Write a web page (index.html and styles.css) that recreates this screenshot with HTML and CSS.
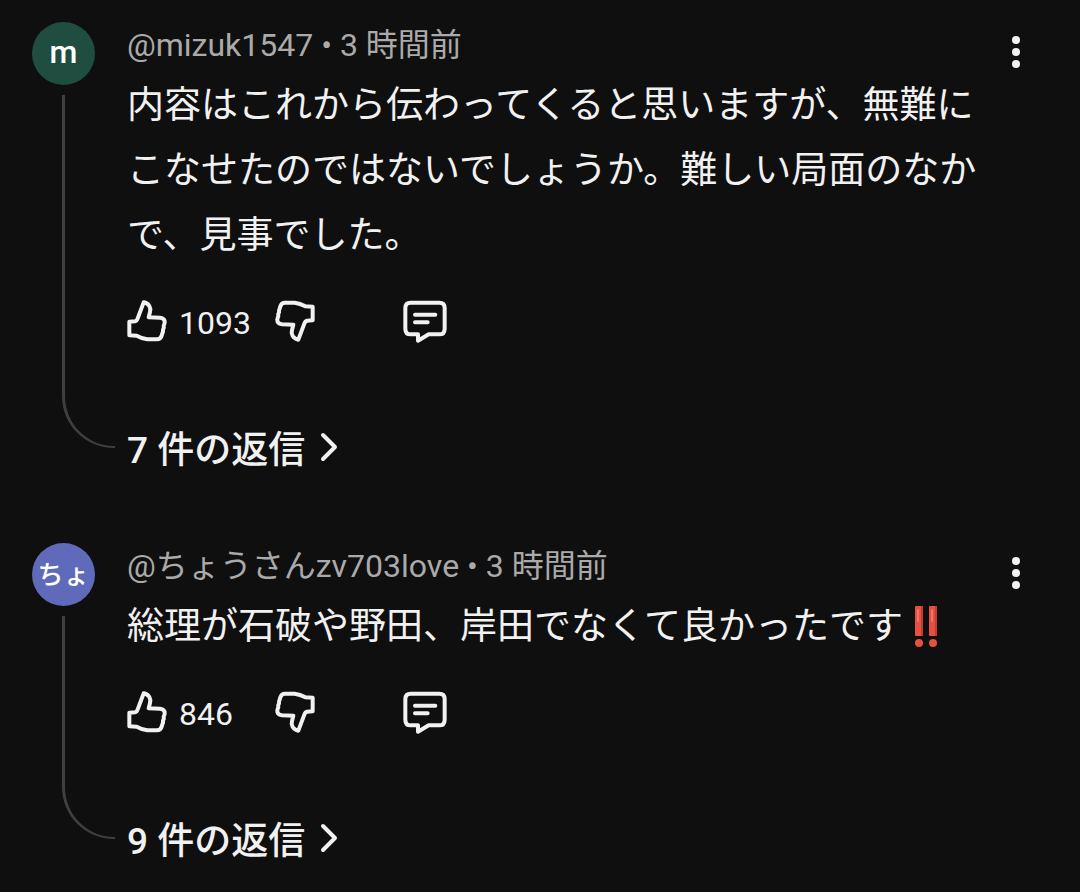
FILE: index.html
```html
<!DOCTYPE html>
<html lang="ja">
<head>
  <meta charset="UTF-8" />
  <meta name="viewport" content="width=device-width, initial-scale=1.0"/>
  <title>コメント</title>
  <link rel="stylesheet" href="styles.css">
</head>
<body>
  <!-- 共通アイコン -->
  <svg class="icon-defs" aria-hidden="true">
    <symbol id="icon-thumb" viewBox="51 57 126 126">
      <path d="M58 122 L75 121 Q80 120 83 112 L101 64 Q112 66 118 75 Q123 84 120 93 L116 109 L150 110 Q165 112 164 124 Q164 129 161 134 Q163 140 159 146 Q160 151 157 157 L155 164 Q152 175 141 175 L112 175 Q96 173 80 164 L58 163 Z"/>
    </symbol>
    <symbol id="icon-comment" viewBox="880 58 132 132">
      <path d="M903 69 H989 Q1005 69 1005 85 V147 Q1005 164 989 164 H957 L925 183 V164 H903 Q887 164 887 147 V85 Q887 69 903 69 Z M916 105 H977 M916 128 H954"/>
    </symbol>
    <symbol id="icon-more" viewBox="0 0 36 36">
      <circle cx="18" cy="6" r="4"/>
      <circle cx="18" cy="18" r="4"/>
      <circle cx="18" cy="30" r="4"/>
    </symbol>
    <symbol id="icon-chevron" viewBox="0 0 20 30">
      <path d="M3 3 L15 15 L3 27"/>
    </symbol>
  </svg>

  <main class="comments">
    <article class="comment">
      <div class="side">
        <div class="avatar green">m</div>
        <div class="thread"></div>
      </div>
      <div class="content">
        <div class="meta"><a href="#">@mizuk1547</a> • 3 時間前</div>
        <p class="text">内容はこれから伝わってくると思いますが、無難にこなせたのではないでしょうか。難しい局面のなかで、見事でした。</p>
        <div class="actions">
          <button aria-label="高評価"><svg class="icon"><use href="#icon-thumb"/></svg></button>
          <span class="count">1093</span>
          <button aria-label="低評価"><svg class="icon down"><use href="#icon-thumb"/></svg></button>
          <button class="reply" aria-label="返信する"><svg class="icon comment-icon"><use href="#icon-comment"/></svg></button>
        </div>
        <button class="replies">7 件の返信<svg class="chevron"><use href="#icon-chevron"/></svg></button>
      </div>
      <button class="more" aria-label="その他"><svg><use href="#icon-more"/></svg></button>
    </article>

    <article class="comment">
      <div class="side">
        <div class="avatar blue">ちょ</div>
        <div class="thread"></div>
      </div>
      <div class="content">
        <div class="meta"><a href="#">@ちょうさんzv703love</a> • 3 時間前</div>
        <p class="text">総理が石破や野田、岸田でなくて良かったです<svg class="emoji" viewBox="-1 5 46 46" role="img" aria-label="!!">
          <rect class="mark" x="11" y="5" width="8" height="30" rx="1"/>
          <rect class="mark" x="25" y="5" width="8" height="30" rx="1"/>
          <path class="shade" d="M17 5 H19 V35 H17 Z M31 5 H33 V35 H31 Z"/>
          <path class="shine" d="M14 9 V20 M28 9 V20"/>
          <circle class="mark" cx="15" cy="42" r="4"/>
          <circle class="mark" cx="29" cy="42" r="4"/>
        </svg></p>
        <div class="actions">
          <button aria-label="高評価"><svg class="icon"><use href="#icon-thumb"/></svg></button>
          <span class="count">846</span>
          <button aria-label="低評価"><svg class="icon down"><use href="#icon-thumb"/></svg></button>
          <button class="reply" aria-label="返信する"><svg class="icon comment-icon"><use href="#icon-comment"/></svg></button>
        </div>
        <button class="replies">9 件の返信<svg class="chevron"><use href="#icon-chevron"/></svg></button>
      </div>
      <button class="more" aria-label="その他"><svg><use href="#icon-more"/></svg></button>
    </article>
  </main>
</body>
</html>
```
FILE: styles.css
```css
* {
  box-sizing: border-box;
}

body {
  margin: 0;
  background: #0f0f0f;
  color: #f1f1f1;
  font-family: Roboto, "Noto Sans CJK JP", sans-serif;
}

button {
  display: flex;
  align-items: center;
  padding: 0;
  border: none;
  background: none;
  color: inherit;
  font-family: inherit;
  cursor: pointer;
}

.icon-defs {
  display: none;
}

.comments {
  display: flex;
  flex-direction: column;
  gap: 68px;
  padding: 22px 46px 0 32px;
}

.comment {
  display: grid;
  grid-template-columns: 63px 1fr 36px;
}

/* アバターとスレッド線 */
.side {
  display: flex;
  flex-direction: column;
}

.avatar {
  display: flex;
  align-items: center;
  justify-content: center;
  height: 63px;
  padding-bottom: 4px;
  border-radius: 50%;
  color: #fff;
  font-weight: 500;
}

.green {
  background: #1f4d40;
  font-size: 32px;
}

.blue {
  background: #5f6abb;
  font-size: 26px;
}

.thread {
  flex: 1;
  width: 53px;
  margin: 10px 0 27px 30px;
  border-left: 3px solid #3f3f3f;
  border-bottom: 2px solid #3f3f3f;
  border-bottom-left-radius: 52px;
}

.content {
  margin-left: 32px;
}

.meta {
  height: 51px;
  color: #aaa;
  font-size: 32px;
  line-height: 46px;
}

.meta a {
  color: inherit;
  text-decoration: none;
}

.text {
  margin: 0;
  font-size: 37px;
  line-height: 65px;
}

.emoji {
  width: 46px;
  height: 46px;
  vertical-align: middle;
}

.mark {
  fill: #e5503f;
}

.shade {
  fill: #c23c33;
}

.shine {
  fill: none;
  stroke: #ee7468;
  stroke-width: 2;
  stroke-linecap: round;
}

/* 評価ボタン */
.actions {
  display: flex;
  align-items: center;
  height: 42px;
  margin-top: 32px;
}

.icon {
  width: 42px;
  height: 42px;
  fill: none;
  stroke: #f1f1f1;
  stroke-width: 12;
  stroke-linecap: round;
  stroke-linejoin: round;
}

.down {
  transform: rotate(180deg);
}

.comment-icon {
  width: 44px;
  height: 44px;
}

.count {
  width: 94px;
  margin-left: 10px;
  padding-top: 3px;
  font-size: 32px;
}

.reply {
  margin-left: 88px;
}

.replies {
  gap: 15px;
  height: 56px;
  margin-top: 77px;
  font-size: 37px;
  font-weight: 500;
}

.chevron {
  width: 20px;
  height: 30px;
  fill: none;
  stroke: #f1f1f1;
  stroke-width: 4;
  stroke-linecap: round;
  stroke-linejoin: round;
}

.more {
  align-self: start;
  height: 60px;
}

.more svg {
  width: 36px;
  height: 36px;
  fill: #f1f1f1;
}
```
